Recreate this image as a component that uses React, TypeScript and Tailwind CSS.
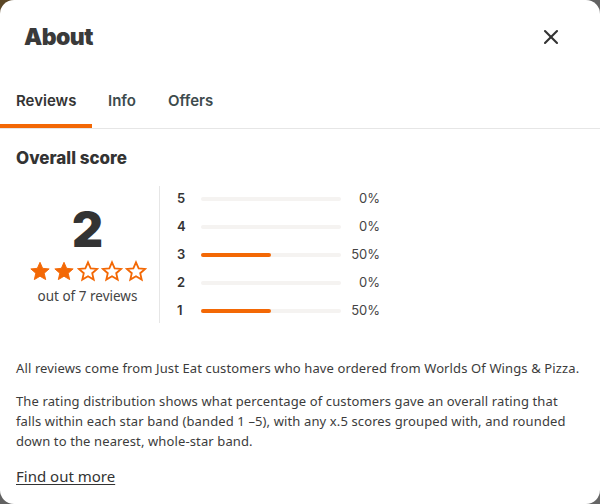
import { X } from "lucide-react";

const rows = [
  { star: 5, pct: 0 },
  { star: 4, pct: 0 },
  { star: 3, pct: 50 },
  { star: 2, pct: 0 },
  { star: 1, pct: 50 },
];

function Star({ filled }: { filled: boolean }) {
  return (
    <svg viewBox="0 0 24 24" className="h-[22px] w-[22px]">
      <path
        d="M12 2.5l2.9 6.6 7.1.6-5.4 4.7 1.6 7-6.2-3.7-6.2 3.7 1.6-7L2 9.7l7.1-.6z"
        fill={filled ? "#f36805" : "none"}
        stroke="#f36805"
        strokeWidth={filled ? 1 : 2}
        strokeLinejoin="miter"
      />
    </svg>
  );
}

export default function App() {
  return (
    <div className="h-[504px] w-[600px] bg-[linear-gradient(135deg,#5a4524_0%,#5f5f5f_20%,#666_100%)] font-['Noto_Sans',sans-serif] text-[#333]">
      <div className="h-full w-full overflow-hidden rounded-[14px] bg-white">
        {/* header */}
        <div className="flex items-center justify-between pl-6 pr-[37px] pt-[20px]">
          <h1 className="font-['Inter',sans-serif] text-[23px] font-black tracking-tight text-[#3a3a3a]">About</h1>
          <X className="h-[24px] w-[24px] text-[#333]" strokeWidth={2.1} />
        </div>

        {/* tabs */}
        <div className="mt-[35px] flex border-b border-[#e6e6e6] font-['Inter',sans-serif] text-[15px] font-semibold text-[#333]">
          <div className="w-[92px] border-b-[4px] border-[#f36805] pb-[12px] pl-4">Reviews</div>
          <div className="pl-4 pr-[16px] text-[#3d4b4d]">Info</div>
          <div className="pl-4 text-[#3d4b4d]">Offers</div>
        </div>

        <div className="px-4">
          <h2 className="mt-[17px] font-['Inter',sans-serif] text-[17px] font-extrabold text-[#333]">Overall score</h2>

          <div className="mt-[14px] flex">
            <div className="flex w-[144px] flex-col items-center border-r border-[#e6e6e6]">
              <div className="mt-[20px] font-['Inter',sans-serif] text-[48px] font-black leading-none text-[#333]">2</div>
              <div className="mt-[6px] flex gap-[2px]">
                {[0, 1, 2, 3, 4].map((i) => (
                  <Star key={i} filled={i < 2} />
                ))}
              </div>
              <div className="mt-[4px] mb-[17px] text-[13.5px] text-[#444]">out of 7 reviews</div>
            </div>

            <div className="flex flex-col gap-[8px] pt-[3px] pl-[17px]">
              {rows.map((r) => (
                <div key={r.star} className="flex h-[20px] items-center font-['Inter',sans-serif] text-[13px]">
                  <span className="w-[24px] font-semibold text-[#333]">{r.star}</span>
                  <div className="h-[4px] w-[140px] rounded-full bg-[#f5f3f1]">
                    <div className="h-full rounded-full bg-[#f36805]" style={{ width: `${r.pct}%` }} />
                  </div>
                  <span className="w-[39px] text-right text-[#444]">{r.pct}%</span>
                </div>
              ))}
            </div>
          </div>

          <div className="mt-[35px] space-y-[13px] text-[13px] leading-[20px] tracking-[0.12px] text-[#3c3c3c]">
            <p>All reviews come from Just Eat customers who have ordered from Worlds Of Wings &amp; Pizza.</p>
            <p className="max-w-[556px]">
              The rating distribution shows what percentage of customers gave an overall rating that falls within each star band (banded 1 –5), with any x.5 scores grouped with, and rounded down to the nearest, whole-star band.
            </p>
          </div>

          <a className="mt-[14px] inline-block text-[15px] text-[#333] underline underline-offset-2">Find out more</a>
        </div>
      </div>
    </div>
  );
}
